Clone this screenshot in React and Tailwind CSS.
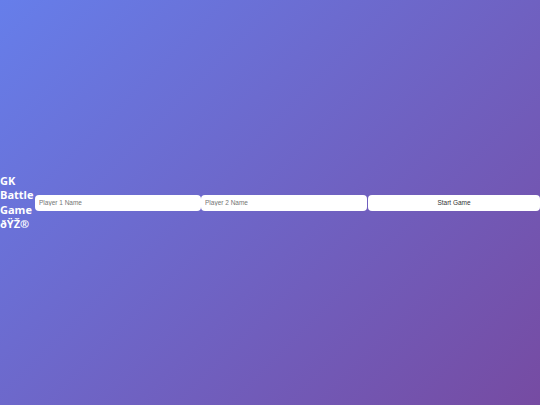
export default function App() {
  return (
    <div className="w-full h-[405px] flex items-center bg-[linear-gradient(135deg,#667eea_0%,#764ba2_100%)] font-['Liberation_Sans',sans-serif]">
      <h1 className="w-[35px] shrink-0 text-white font-bold text-[11px] leading-[14.5px] font-['Open_Sans',sans-serif]">
        GK Battle Game {"\u00f0\u0178\u017d\u00ae"}
      </h1>
      <div className="flex-1 flex items-center">
        <input
          className="w-[166px] shrink-0 h-[16px] bg-white rounded-[4px] px-[4px] text-[6.5px] text-[#333] placeholder:text-[#757575] outline-none"
          placeholder="Player 1 Name"
        />
        <input
          className="w-[166px] shrink-0 h-[16px] bg-white rounded-[4px] px-[4px] text-[6.5px] text-[#333] placeholder:text-[#757575] outline-none"
          placeholder="Player 2 Name"
        />
        <button className="flex-1 min-w-0 ml-[1px] h-[16px] bg-white rounded-[4px] text-[6.5px] leading-[16px] text-[#333]">
          Start Game
        </button>
      </div>
    </div>
  );
}
